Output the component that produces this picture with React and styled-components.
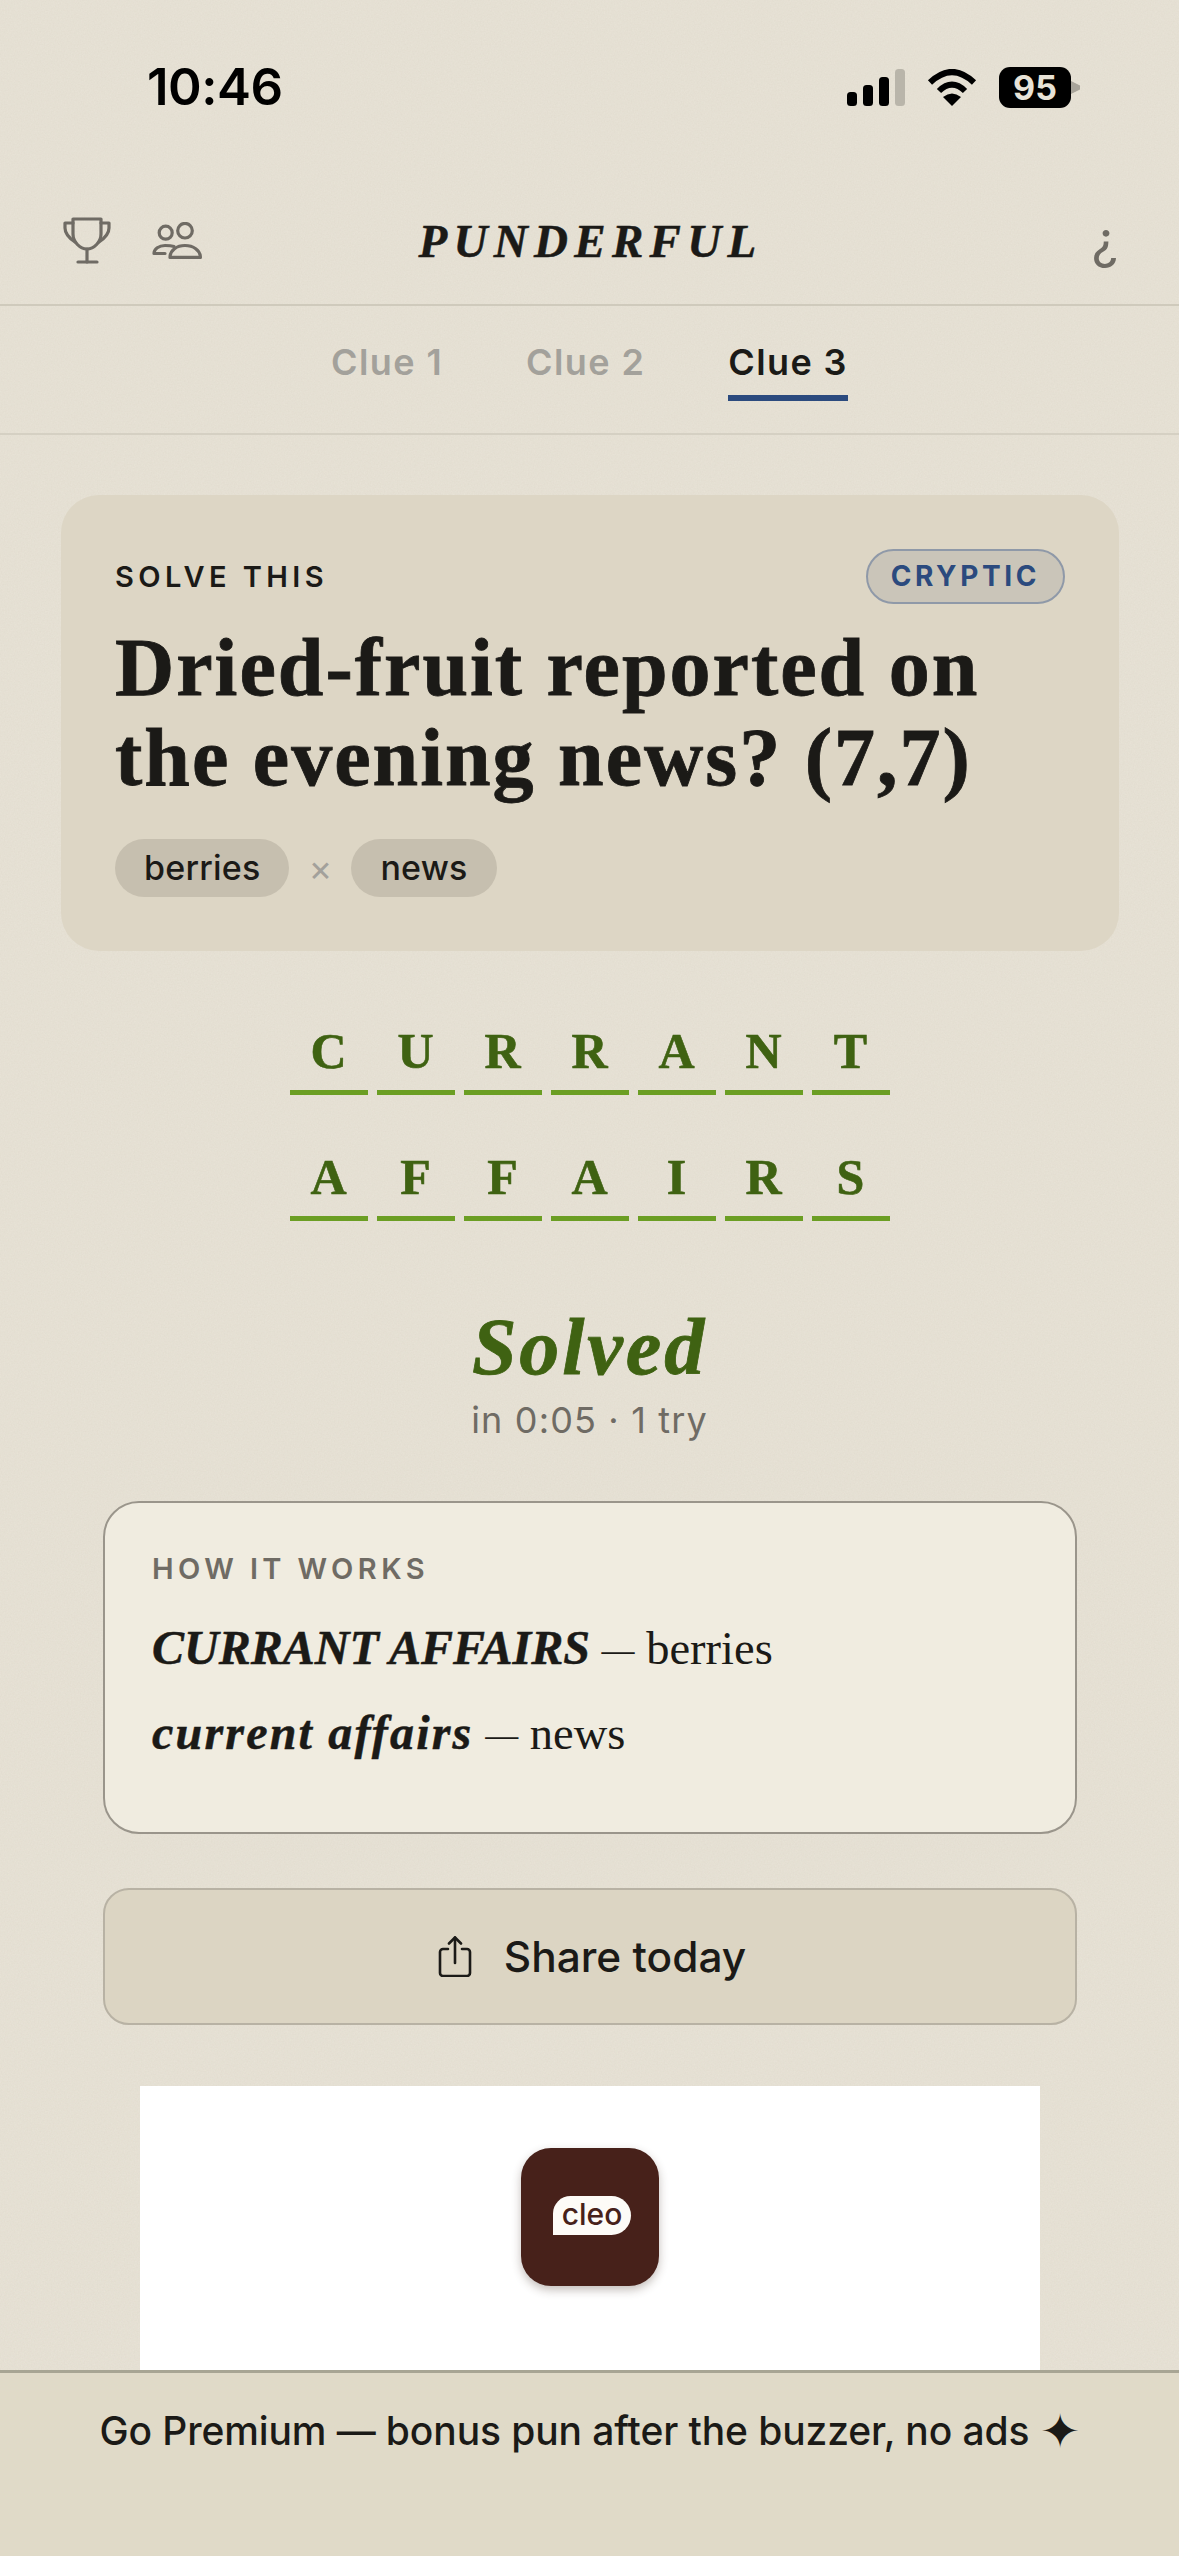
import React from "react";
import styled, { createGlobalStyle } from "styled-components";

const SANS = `Inter, "Noto Sans", sans-serif`;
const SERIF = `"Liberation Serif", "Times New Roman", serif`;
const INK = "#1b1a17";
const MUTED = "#6f6b64";
const GREEN = "#3f6212";

const GRAIN =
  "data:image/svg+xml,%3Csvg xmlns='http://www.w3.org/2000/svg' width='300' height='300'%3E%3Cfilter id='n'%3E%3CfeTurbulence type='fractalNoise' baseFrequency='0.7' numOctaves='3'/%3E%3CfeColorMatrix values='0 0 0 0 0.45 0 0 0 0 0.4 0 0 0 0 0.3 0 0 0 0.12 0'/%3E%3C/filter%3E%3Crect width='300' height='300' filter='url(%23n)'/%3E%3C/svg%3E";

const GlobalStyle = createGlobalStyle`
  * { box-sizing: border-box; }
  html, body { margin: 0; padding: 0; }
  body {
    background: #e8e3d7;
    font-family: ${SANS};
    color: ${INK};
  }
`;

const Page = styled.div`
  width: 1179px;
  height: 2556px;
  display: flex;
  flex-direction: column;
  overflow: hidden;
  background-color: #e8e3d7;
  background-image: url("${GRAIN}");
`;

const StatusBar = styled.div`
  height: 176px;
  flex: none;
  display: flex;
  justify-content: space-between;
  padding: 67px 98px 0 147px;
`;

const Clock = styled.div`
  font-size: 51px;
  font-weight: 600;
  line-height: 40px;
  letter-spacing: -0.5px;
  color: #000;
`;

const StatusIcons = styled.div`
  display: flex;
  align-items: flex-start;
  gap: 22px;
`;

const Battery = styled.div`
  position: relative;
  width: 72px;
  height: 41px;
  border-radius: 11px;
  margin-right: 10px;
  background: #000;
  color: #e8e3d7;
  font-size: 34px;
  font-weight: 700;
  line-height: 41px;
  text-align: center;
  &::after {
    content: "";
    position: absolute;
    left: 72px;
    top: 14px;
    width: 9px;
    height: 13px;
    clip-path: polygon(0 0, 100% 35%, 100% 65%, 0 100%);
    background: #a8a49a;
  }
`;

const Header = styled.header`
  height: 130px;
  flex: none;
  display: grid;
  grid-template-columns: 1fr auto 1fr;
  align-items: center;
  padding: 0 61px 0 63px;
  border-bottom: 2px solid #cfcabc;
`;

const HeaderLeft = styled.div`
  display: flex;
  align-items: center;
  gap: 41px;
`;

const Title = styled.h1`
  margin: 2px 0 0;
  font-family: ${SERIF};
  font-style: italic;
  font-weight: 700;
  font-size: 47px;
  line-height: 50px;
  letter-spacing: 6.3px;
  color: ${INK};
  -webkit-text-stroke: 0.5px ${INK};
`;

const HelpMark = styled.div`
  justify-self: end;
  font-size: 52px;
  line-height: 52px;
  color: ${MUTED};
  font-weight: 400;
`;

const Tabs = styled.nav`
  height: 129px;
  flex: none;
  display: flex;
  justify-content: center;
  gap: 83px;
  padding-top: 34px;
  border-bottom: 2px solid #d5d0c3;
`;

const Tab = styled.div`
  height: 61px;
  font-size: 36px;
  font-weight: 600;
  line-height: 44px;
  letter-spacing: 1.4px;
  color: ${(p) => (p.$active ? INK : "#a3a19b")};
  border-bottom: 6px solid ${(p) => (p.$active ? "#2b4a7e" : "transparent")};
`;

const Main = styled.main`
  flex: 1;
  min-height: 0;
  overflow: hidden;
  display: flex;
  flex-direction: column;
  padding-top: 60px;
  & > * {
    flex: none;
  }
`;

const ClueCard = styled.section`
  margin: 0 60px 0 61px;
  padding: 54px;
  border-radius: 38px;
  background: #ddd6c5;
`;

const ClueTop = styled.div`
  display: flex;
  justify-content: space-between;
  align-items: center;
`;

const Eyebrow = styled.div`
  font-size: 29px;
  font-weight: 600;
  line-height: 36px;
  letter-spacing: 4.4px;
  color: ${(p) => p.$color || INK};
`;

const Badge = styled.div`
  height: 55px;
  padding: 0 23px;
  border-radius: 28px;
  border: 2px solid #8f99a8;
  background: #cac5b9;
  font-size: 28px;
  font-weight: 700;
  line-height: 51px;
  letter-spacing: 3.6px;
  color: #2b4a7e;
`;

const Clue = styled.h2`
  margin: 19px 0 36px;
  font-family: ${SERIF};
  font-weight: 700;
  font-size: 82px;
  line-height: 90px;
  letter-spacing: 2px;
  color: ${INK};
  -webkit-text-stroke: 0.8px ${INK};
`;

const ChipRow = styled.div`
  display: flex;
  align-items: center;
`;

const Chip = styled.span`
  height: 58px;
  padding: 0 29px;
  border-radius: 29px;
  background: #c6bfaf;
  font-size: 34px;
  font-weight: 500;
  line-height: 58px;
  letter-spacing: 0.2px;
  color: ${INK};
`;

const Times = styled.span`
  width: 62px;
  text-align: center;
  font-size: 36px;
  line-height: 58px;
  color: #a3a19b;
`;

const Board = styled.div`
  margin-top: 69px;
  display: flex;
  flex-direction: column;
  align-items: center;
  gap: 51px;
`;

const WordRow = styled.div`
  display: flex;
  gap: 9px;
`;

const Cell = styled.div`
  width: 78px;
  height: 75px;
  border-bottom: 5px solid #6b9e23;
  text-align: center;
  font-family: ${SERIF};
  font-weight: 700;
  font-size: 50px;
  line-height: 62px;
  color: ${GREEN};
  -webkit-text-stroke: 0.6px ${GREEN};
`;

const Result = styled.div`
  margin-top: 84px;
  text-align: center;
`;

const Solved = styled.div`
  font-family: ${SERIF};
  font-style: italic;
  font-weight: 700;
  font-size: 80px;
  line-height: 84px;
  letter-spacing: 2.9px;
  color: ${GREEN};
  -webkit-text-stroke: 0.8px ${GREEN};
`;

const SolvedMeta = styled.div`
  margin-top: 9px;
  font-size: 36px;
  line-height: 44px;
  letter-spacing: 1.15px;
  color: ${MUTED};
`;

const Explain = styled.section`
  margin: 59px 102px 0 103px;
  height: 333px;
  padding: 48px 47px 0;
  border: 2px solid #9a958b;
  border-radius: 36px;
  background: #f0ece0;
`;

const ExplainLine = styled.p`
  margin: ${(p) => (p.$first ? "29px" : "19px")} 0 0;
  font-family: ${SERIF};
  font-size: 46.5px;
  line-height: 64px;
  color: ${INK};
`;

const Term = styled.b`
  font-style: italic;
  font-weight: 700;
  font-size: 48px;
  letter-spacing: ${(p) => p.$track}px;
  -webkit-text-stroke: 0.5px ${INK};
`;

const Dash = styled.span`
  font-size: 33px;
  vertical-align: 3px;
`;

const ShareButton = styled.button`
  margin: 54px 102px 0 103px;
  height: 137px;
  padding: 0 0 0 4px;
  display: flex;
  align-items: center;
  justify-content: center;
  gap: 32px;
  border: 2px solid #b8b2a4;
  border-radius: 26px;
  background: #dcd5c3;
  font-family: ${SANS};
  font-size: 42.4px;
  font-weight: 550;
  color: ${INK};
`;

const AdSlot = styled.div`
  margin: 61px 139px 0 140px;
  height: 290px;
  display: flex;
  justify-content: center;
  padding-top: 62px;
  background: #fff;
`;

const AppIcon = styled.div`
  width: 138px;
  height: 138px;
  display: flex;
  align-items: center;
  justify-content: center;
  border-radius: 30px;
  background: #47211a;
  box-shadow: 0 4px 10px rgba(60, 40, 30, 0.3);
`;

const CleoBubble = styled.div`
  width: 78px;
  height: 39px;
  margin-left: 4px;
  margin-top: -4px;
  border-radius: 18px 20px 20px 0;
  background: #fdfbf7;
  color: #47211a;
  font-size: 30px;
  font-weight: 500;
  line-height: 36px;
  text-align: center;
`;

const PromoBar = styled.footer`
  height: 186px;
  flex: none;
  padding-top: 34px;
  border-top: 3px solid #a8a594;
  background: #e0dac8;
  text-align: center;
  font-size: 39px;
  font-weight: 550;
  line-height: 48px;
  letter-spacing: -0.1px;
  color: ${INK};
`;

const Sparkle = styled.span`
  font-size: 48px;
  line-height: 0;
  vertical-align: -3px;
`;

const SignalBars = () => (
  <svg width="58" height="37" viewBox="0 0 58 37" style={{ marginTop: 2 }}>
    <rect x="0" y="23" width="10" height="14" rx="3.5" fill="#000" />
    <rect x="16" y="16" width="10" height="21" rx="3.5" fill="#000" />
    <rect x="32" y="8" width="10" height="29" rx="3.5" fill="#000" />
    <rect x="48" y="0" width="10" height="37" rx="3.5" fill="#b9b5aa" />
  </svg>
);

const WifiGlyph = () => (
  <svg width="50" height="37" viewBox="0 0 50 37" fill="none" style={{ marginTop: 2 }}>
    <path d="M3 13.5Q25 -7.5 47 13.5" stroke="#000" strokeWidth="6" />
    <path d="M12 22Q25 9 38 22" stroke="#000" strokeWidth="6" />
    <path d="M25 37L16 28Q25 21 34 28Z" fill="#000" />
  </svg>
);

const TrophyIcon = () => (
  <svg width="48" height="47" viewBox="0 0 48 47" fill="none" stroke={MUTED} strokeWidth="3.2" strokeLinecap="round" strokeLinejoin="round">
    <path d="M10 2H38V17C38 25 31 32 24 32C17 32 10 25 10 17Z" />
    <path d="M24 32V45" />
    <path d="M15 45H34" />
    <path d="M10 6H2V11C2 17 6 21 12 25" />
    <path d="M38 6H46V11C46 17 42 21 36 25" />
  </svg>
);

const PeopleIcon = () => (
  <svg width="50" height="37" viewBox="0 0 50 37" fill="none" stroke={MUTED} strokeWidth="3.2" strokeLinecap="round" strokeLinejoin="round">
    <circle cx="13.7" cy="10.7" r="6.5" />
    <circle cx="33" cy="8.7" r="7.3" />
    <path d="M22 24.5C19 23.5 16 23.5 13 23.5C7 23.5 2 27 2 31.5H13" />
    <path d="M18 35.4C18 28 25 23.5 33 23.5C41 23.5 48.4 28 48.4 35.4Z" />
  </svg>
);

const ShareIcon = () => (
  <svg width="34" height="41" viewBox="0 0 34 41" fill="none" stroke={INK} strokeWidth="2.6" strokeLinecap="round" strokeLinejoin="round">
    <path d="M10 13H5a3 3 0 0 0-3 3V37a3 3 0 0 0 3 3H29a3 3 0 0 0 3-3V16a3 3 0 0 0-3-3H24" />
    <path d="M17 1.5V27" />
    <path d="M11 7.5L17 1.5L23 7.5" />
  </svg>
);

const WORDS = ["CURRANT", "AFFAIRS"];

export default function App() {
  return (
    <Page>
      <GlobalStyle />
      <StatusBar>
        <Clock>10:46</Clock>
        <StatusIcons>
          <SignalBars />
          <WifiGlyph />
          <Battery>95</Battery>
        </StatusIcons>
      </StatusBar>

      <Header>
        <HeaderLeft>
          <TrophyIcon />
          <PeopleIcon />
        </HeaderLeft>
        <Title>PUNDERFUL</Title>
        <HelpMark>¿</HelpMark>
      </Header>

      <Tabs>
        <Tab>Clue 1</Tab>
        <Tab>Clue 2</Tab>
        <Tab $active>Clue 3</Tab>
      </Tabs>

      <Main>
        <ClueCard>
          <ClueTop>
            <Eyebrow>SOLVE THIS</Eyebrow>
            <Badge>CRYPTIC</Badge>
          </ClueTop>
          <Clue>
            Dried-fruit reported on
            <br />
            the evening news? (7,7)
          </Clue>
          <ChipRow>
            <Chip>berries</Chip>
            <Times>×</Times>
            <Chip>news</Chip>
          </ChipRow>
        </ClueCard>

        <Board>
          {WORDS.map((word) => (
            <WordRow key={word}>
              {word.split("").map((letter, i) => (
                <Cell key={i}>{letter}</Cell>
              ))}
            </WordRow>
          ))}
        </Board>

        <Result>
          <Solved>Solved</Solved>
          <SolvedMeta>in 0:05 · 1 try</SolvedMeta>
        </Result>

        <Explain>
          <Eyebrow $color={MUTED}>HOW IT WORKS</Eyebrow>
          <ExplainLine $first>
            <Term $track={0}>CURRANT AFFAIRS</Term> <Dash>—</Dash> berries
          </ExplainLine>
          <ExplainLine>
            <Term $track={2.2}>current affairs</Term> <Dash>—</Dash> news
          </ExplainLine>
        </Explain>

        <ShareButton>
          <ShareIcon />
          Share today
        </ShareButton>

        <AdSlot>
          <AppIcon>
            <CleoBubble>cleo</CleoBubble>
          </AppIcon>
        </AdSlot>
      </Main>

      <PromoBar>
        Go Premium — bonus pun after the buzzer, no ads <Sparkle>✦</Sparkle>
      </PromoBar>
    </Page>
  );
}
